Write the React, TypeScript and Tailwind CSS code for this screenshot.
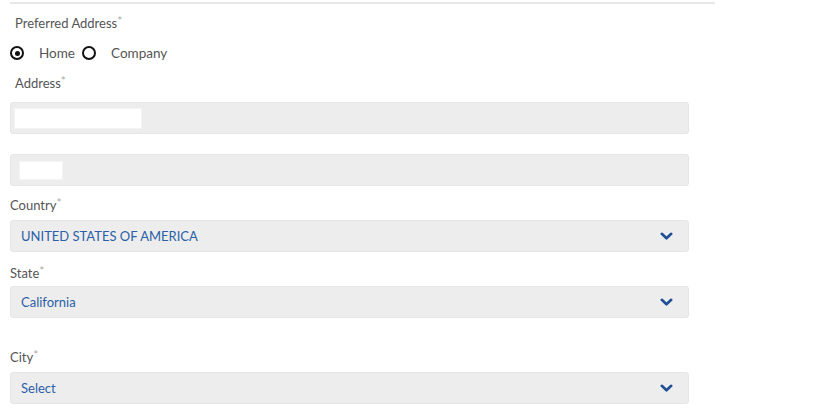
import React from "react";

const Label = ({ text, className = "" }: { text: string; className?: string }) => (
  <p className={`text-[13px] leading-[18px] text-[#555] ${className}`}>
    {text}
    <span className="text-[#aaa] text-[12px] relative -top-[3px]">*</span>
  </p>
);

const Chevron = () => (
  <svg width="13" height="9" viewBox="0 0 13 9" className="mr-[15px]">
    <path d="M1.8 1.8 L6.5 6.3 L11.2 1.8" fill="none" stroke="#1f4f94" strokeWidth="2.6" strokeLinecap="round" strokeLinejoin="round" />
  </svg>
);

const Select = ({ value }: { value: string }) => (
  <div className="w-[679px] h-[32px] bg-[#ededed] border border-[#e6e6e6] rounded-[3px] flex items-center justify-between pl-[10px]">
    <span className="text-[13px] text-[#2b5fa8]">{value}</span>
    <Chevron />
  </div>
);

const Radio = ({ checked }: { checked?: boolean }) => (
  <span className="w-[14px] h-[14px] rounded-full border-[2px] border-[#111] flex items-center justify-center">
    {checked && <span className="w-[5px] h-[5px] rounded-full bg-[#111]" />}
  </span>
);

const App = () => {
  return (
    <div className="w-[830px] h-[415px] bg-white overflow-hidden" style={{ fontFamily: "Lato, 'Open Sans', sans-serif" }}>
      <div className="ml-[10px] mt-[2px] w-[705px] h-[2px] bg-[#e8e8e8]" />

      <div className="pl-[10px]">
        <Label text="Preferred Address" className="ml-[5px] mt-[10px]" />

        <div className="flex items-center mt-[10px] text-[13.5px] text-[#555]">
          <span><Radio checked /></span>
          <span className="ml-[15px]">Home</span>
          <span className="ml-[7px]"><Radio /></span>
          <span className="ml-[15px]">Company</span>
        </div>

        <Label text="Address" className="ml-[5px] mt-[11px]" />

        <div className="mt-[9px] w-[679px] h-[32px] bg-[#ededed] border border-[#e6e6e6] rounded-[3px] flex items-center pl-[3px]">
          <div className="w-[128px] h-[21px] bg-white border border-[#f4f4f4]" />
        </div>

        <div className="mt-[20px] w-[679px] h-[32px] bg-[#ededed] border border-[#e6e6e6] rounded-[3px] flex items-center pl-[8px]">
          <div className="w-[44px] h-[19px] bg-white border border-[#f4f4f4]" />
        </div>

        <Label text="Country" className="mt-[10px]" />
        <div className="mt-[5px]"><Select value="UNITED STATES OF AMERICA" /></div>

        <Label text="State" className="mt-[12px]" />
        <div className="mt-[3px]"><Select value="California" /></div>

        <Label text="City" className="mt-[30px]" />
        <div className="mt-[5px]"><Select value="Select" /></div>
      </div>
    </div>
  );
};

export default App;
